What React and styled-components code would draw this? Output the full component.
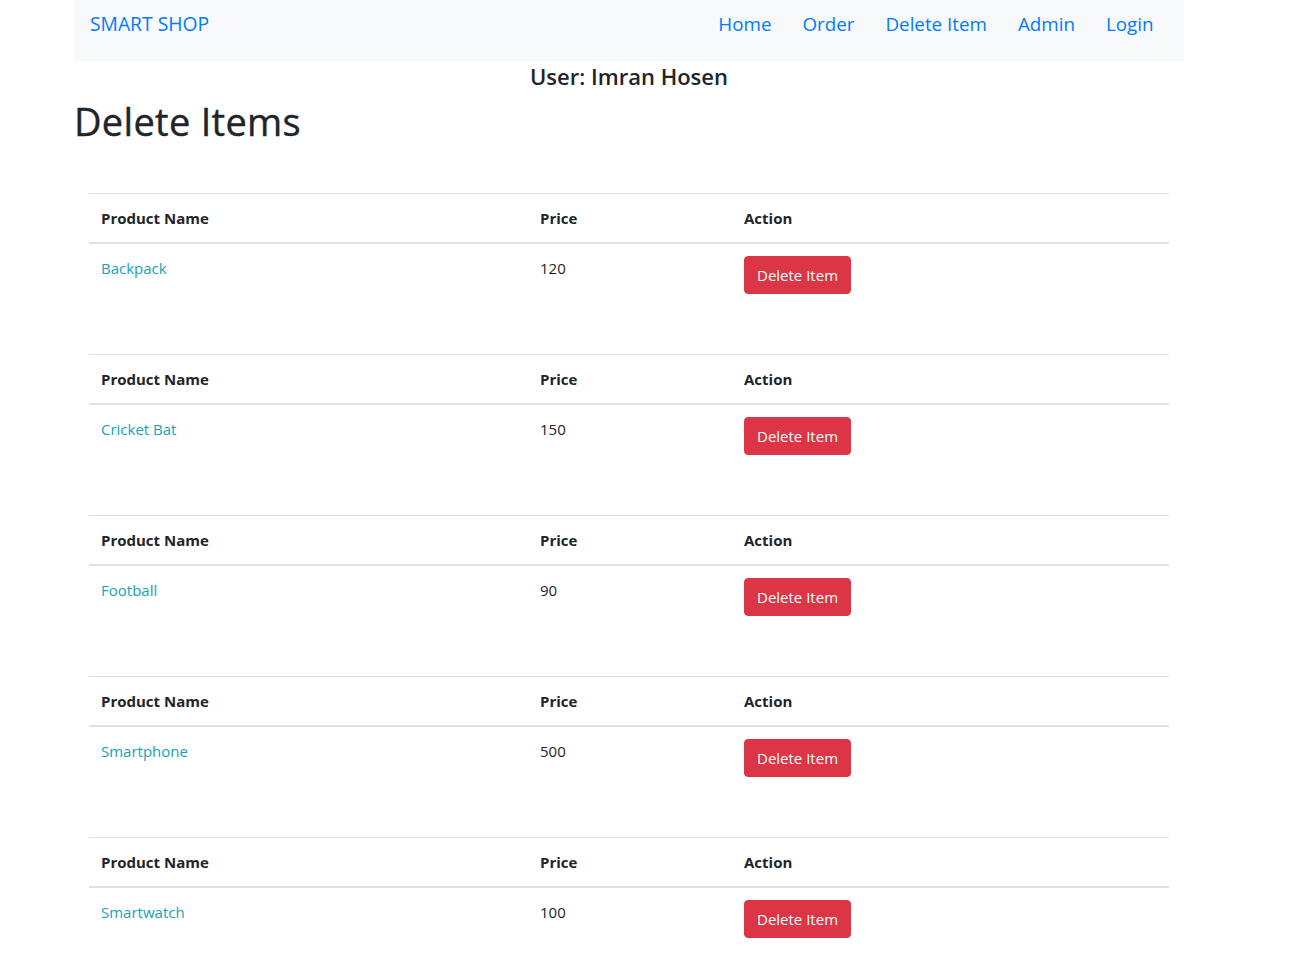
import React from "react";
import styled, { createGlobalStyle } from "styled-components";

const Global = createGlobalStyle`
  html, body { margin: 0; padding: 0; overflow: hidden; background: #fff; }
  body {
    font-family: "Open Sans", "Noto Sans", sans-serif;
    font-size: 16px;
    line-height: 1.5;
    color: #212529;
  }
  * { box-sizing: border-box; }
`;

const Page = styled.div`
  width: 1110px;
  margin-left: 74px;
`;

const Navbar = styled.nav`
  height: 61px;
  background: #f8f9fa;
  display: flex;
  align-items: flex-start;
  justify-content: space-between;
  padding: 10px 15px 0 16px;
`;

const Brand = styled.a`
  font-size: 19.3px;
  line-height: 28px;
  color: #007bff;
  text-decoration: none;
`;

const NavList = styled.ul`
  list-style: none;
  margin: 0;
  padding: 0;
  display: flex;
`;

const NavLink = styled.a`
  display: block;
  padding: 0 15.5px;
  font-size: 18.8px;
  line-height: 28px;
  color: #007bff;
  text-decoration: none;
`;

const UserLine = styled.h4`
  margin: 1px 0 0;
  text-align: center;
  font-size: 22px;
  font-weight: 600;
  line-height: 29px;
`;

const Title = styled.h1`
  margin: 6px 0 0;
  font-size: 38px;
  font-weight: 500;
  line-height: 48px;
  letter-spacing: 0.3px;
  -webkit-text-stroke: 0.4px #212529;
`;

const TableList = styled.div`
  padding: 48px 15px 0;
`;

const Table = styled.table`
  width: 100%;
  border-collapse: collapse;
  margin-bottom: 48px;
`;

const Th = styled.th`
  text-align: left;
  font-weight: 700;
  font-size: 15px;
  padding: 12px;
  line-height: 24px;
  border-top: 1px solid #dee2e6;
  border-bottom: 2px solid #dee2e6;
  width: ${(p) => p.$w || "auto"};
`;

const Td = styled.td`
  padding: 12px;
  vertical-align: top;
  line-height: 24px;
  font-size: 15px;
`;

const ProductLink = styled.a`
  color: #17a2b8;
  text-decoration: none;
`;

const DangerButton = styled.button`
  display: inline-block;
  font-family: inherit;
  font-size: 15px;
  line-height: 24px;
  padding: 6px 12px;
  border: 1px solid #dc3545;
  border-radius: 4px;
  background: #dc3545;
  color: #fff;
  cursor: pointer;
`;

const items = [
  { name: "Backpack", price: 120 },
  { name: "Cricket Bat", price: 150 },
  { name: "Football", price: 90 },
  { name: "Smartphone", price: 500 },
  { name: "Smartwatch", price: 100 },
];

export default function App() {
  return (
    <>
      <Global />
      <Page>
        <Navbar>
          <Brand href="#">SMART SHOP</Brand>
          <NavList>
            {["Home", "Order", "Delete Item", "Admin", "Login"].map((l) => (
              <li key={l}>
                <NavLink href="#">{l}</NavLink>
              </li>
            ))}
          </NavList>
        </Navbar>
        <UserLine>User: Imran Hosen</UserLine>
        <Title>Delete Items</Title>
        <TableList>
          {items.map((it) => (
            <Table key={it.name}>
              <thead>
                <tr>
                  <Th $w="439px">Product Name</Th>
                  <Th $w="204px">Price</Th>
                  <Th>Action</Th>
                </tr>
              </thead>
              <tbody>
                <tr>
                  <Td>
                    <ProductLink href="#">{it.name}</ProductLink>
                  </Td>
                  <Td>{it.price}</Td>
                  <Td>
                    <DangerButton>Delete Item</DangerButton>
                  </Td>
                </tr>
              </tbody>
            </Table>
          ))}
        </TableList>
      </Page>
    </>
  );
}
